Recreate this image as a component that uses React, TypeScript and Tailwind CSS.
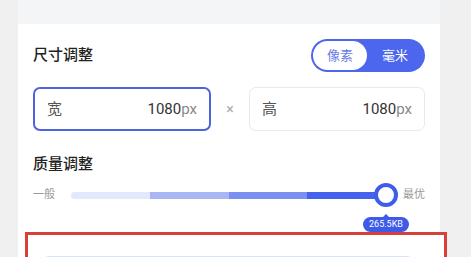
import { useState } from 'react'

const font = { fontFamily: 'Roboto, "Noto Sans CJK SC", "Noto Sans", sans-serif' }

const segments = ['bg-[#e3e8fc]', 'bg-[#a9b6f4]', 'bg-[#7c90f1]', 'bg-[#4562ec]']

function UnitToggle() {
  const [unit, setUnit] = useState<'px' | 'mm'>('px')
  return (
    <div className="flex h-[33px] w-[114px] items-center rounded-full bg-[#4c66ee] p-[2px]">
      <button
        onClick={() => setUnit('px')}
        className={`flex h-full w-[54px] items-center justify-center rounded-full text-[13px] ${unit === 'px' ? 'bg-white text-[#6a7ce9]' : 'text-white'}`}
      >
        像素
      </button>
      <button
        onClick={() => setUnit('mm')}
        className={`flex h-full flex-1 items-center justify-center rounded-full text-[13px] ${unit === 'mm' ? 'bg-white text-[#6a7ce9]' : 'text-white'}`}
      >
        毫米
      </button>
    </div>
  )
}

function SizeInput({ label, value, active }: { label: string; value: string; active?: boolean }) {
  return (
    <div
      className={`flex h-[44px] flex-1 items-center justify-between rounded-[7px] bg-white px-3 ${active ? 'border-2 border-[#4f63e0]' : 'border border-[#e8e9ec]'}`}
    >
      <span className="text-[15px] text-[#555]">{label}</span>
      <span className="text-[15px] text-[#333]">
        {value}
        <span className="text-[#888]">px</span>
      </span>
    </div>
  )
}

function QualitySlider({ size }: { size: string }) {
  return (
    <div className="flex h-[24px] items-center text-[11px] text-[#999]">
      <span className="w-[22px]">一般</span>
      <div className="relative ml-4 mr-[5px] flex h-[24px] flex-1 items-center pr-3">
        <div className="flex h-[7px] w-full overflow-hidden rounded-full">
          {segments.map((c, i) => (
            <div key={i} className={`h-full flex-1 ${c}`} />
          ))}
        </div>
        <div className="absolute right-0 top-0 h-[24px] w-[24px] rounded-full border-[4px] border-[#3f5ceb] bg-white" />
        <div className="absolute right-[-11px] top-[31px] flex flex-col items-center">
          <div className="h-0 w-0 border-x-[3px] border-b-[3px] border-x-transparent border-b-[#3d5ae9]" />
          <div className="flex h-[15px] w-[46px] items-center justify-center rounded-full bg-[#3d5ae9] text-[9px] text-white">
            {size}
          </div>
        </div>
      </div>
      <span className="w-[22px]">最优</span>
    </div>
  )
}

export default function App() {
  return (
    <div className="h-[257px] w-[471px] overflow-hidden bg-[#f0f0f1]" style={font}>
      <div className="ml-[18px] w-[422px]">
        <div className="h-[24px] bg-[#f4f5f7]" />
        <div className="h-[233px] bg-white">
          <div className="px-[15px] pt-[15px]">
            <div className="flex items-center justify-between">
              <span className="text-[15px] font-medium text-[#222]">尺寸调整</span>
              <UnitToggle />
            </div>
            <div className="mt-[15px] flex items-center">
              <SizeInput label="宽" value="1080" active />
              <span className="w-[38px] text-center text-[14px] text-[#aaa]">×</span>
              <SizeInput label="高" value="1080" />
            </div>
            <div className="mt-[22px] text-[15px] font-medium leading-[22px] text-[#222]">质量调整</div>
            <div className="mt-[8px] h-[49px]">
              <QualitySlider size="265.5KB" />
            </div>
          </div>
          {/* highlighted action area */}
          <div className="ml-[7px] h-[40px] w-[422px] border-[3px] border-[#d8413b] bg-white">
            <div className="ml-[15px] mt-[21px] h-[20px] w-[370px] rounded-t-md border-t border-[#d6e3fc] bg-[#f5f9ff]" />
          </div>
        </div>
      </div>
    </div>
  )
}
